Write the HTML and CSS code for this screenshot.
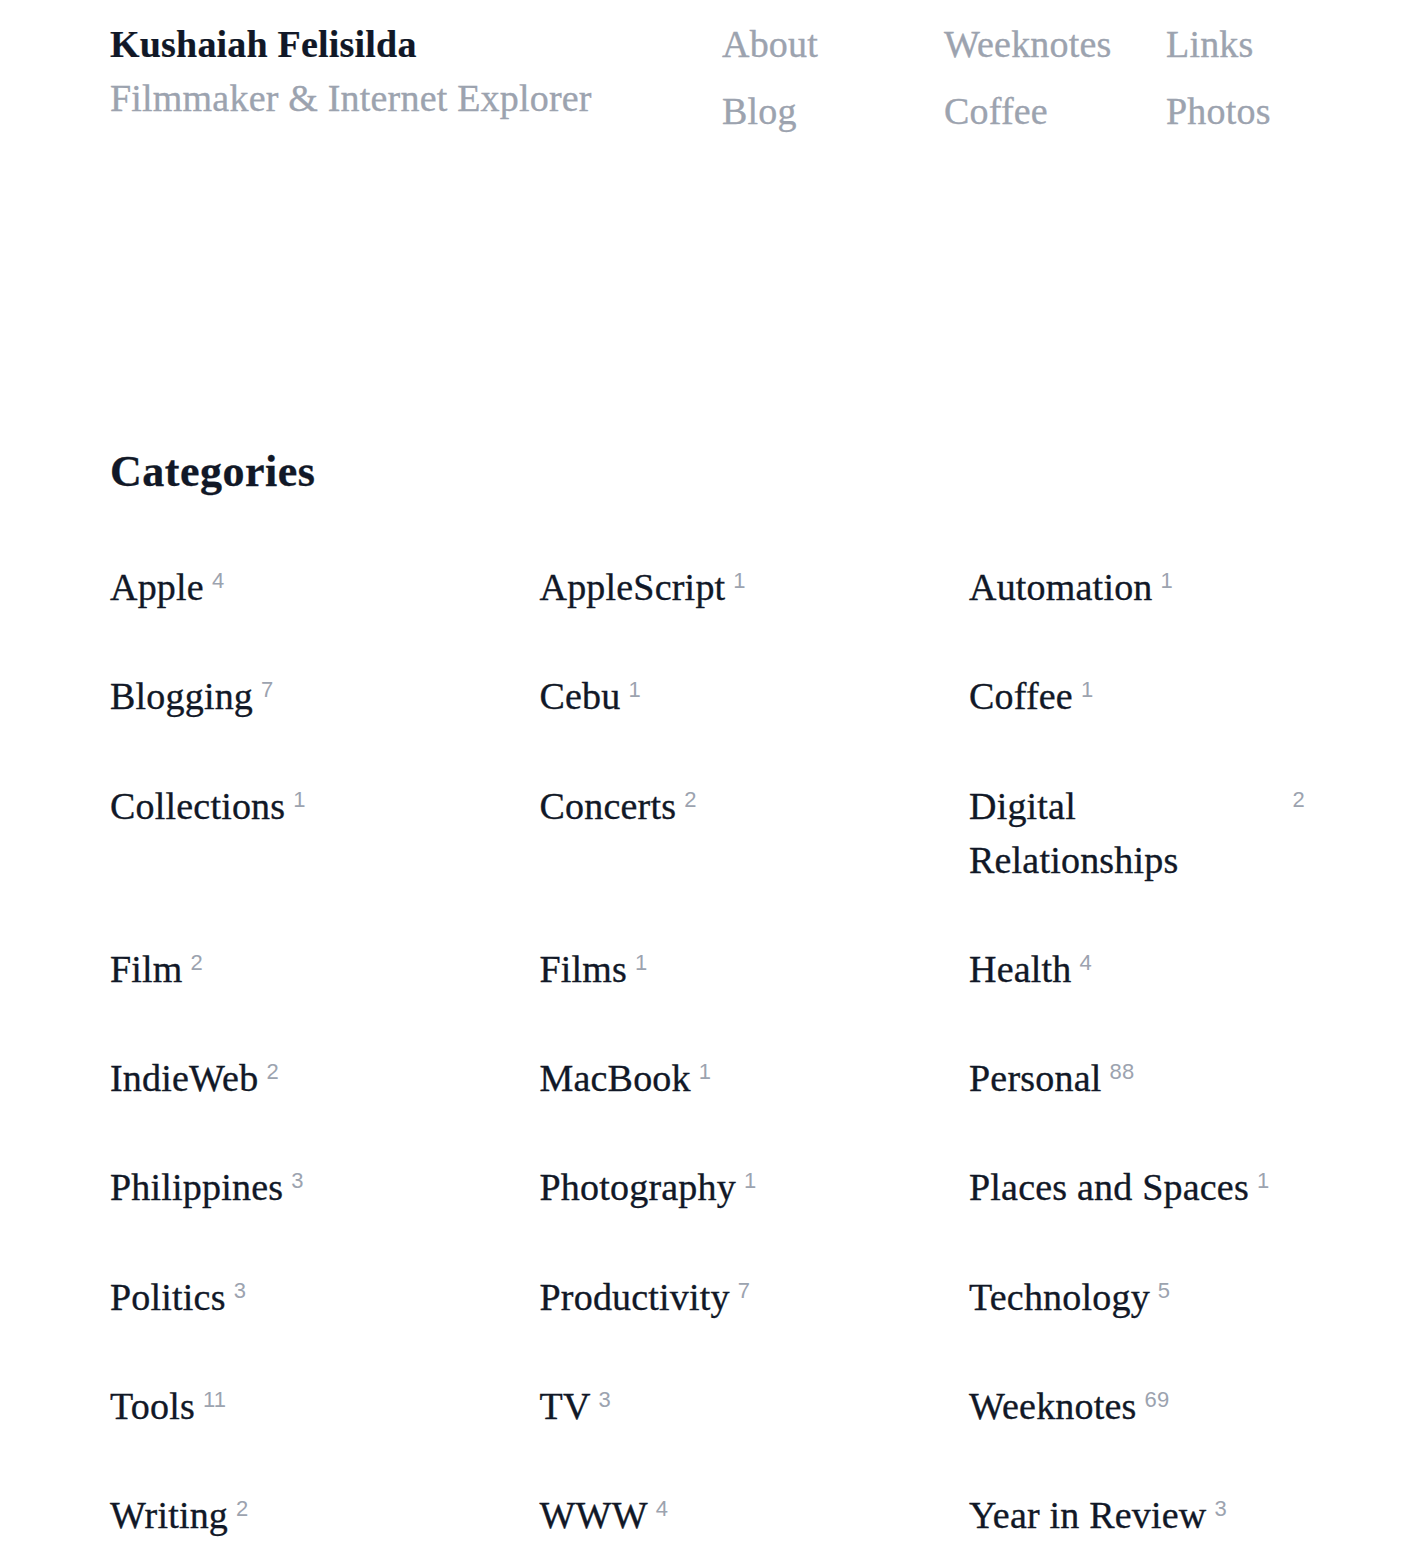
FILE: index.html
```html
<!DOCTYPE html>
<html lang="en">
<head>
<meta charset="utf-8">
<title>Categories — Kushaiah Felisilda</title>
<link rel="stylesheet" href="styles.css">
</head>
<body>
<div class="page">
  <header class="site-header">
    <div class="brand">
      <div class="brand-name">Kushaiah Felisilda</div>
      <div class="brand-tag">Filmmaker &amp; Internet Explorer</div>
    </div>
    <nav class="site-nav">
      <a href="#">About</a>
      <a href="#">Weeknotes</a>
      <a href="#">Links</a>
      <a href="#">Blog</a>
      <a href="#">Coffee</a>
      <a href="#">Photos</a>
    </nav>
  </header>

  <main class="content">
    <h1 class="title">Categories</h1>
    <ul class="cat-grid">
      <li class="cat"><a class="cat-name" href="#">Apple</a><span class="cat-count">4</span></li>
      <li class="cat"><a class="cat-name" href="#">AppleScript</a><span class="cat-count">1</span></li>
      <li class="cat"><a class="cat-name" href="#">Automation</a><span class="cat-count">1</span></li>
      <li class="cat"><a class="cat-name" href="#">Blogging</a><span class="cat-count">7</span></li>
      <li class="cat"><a class="cat-name" href="#">Cebu</a><span class="cat-count">1</span></li>
      <li class="cat"><a class="cat-name" href="#">Coffee</a><span class="cat-count">1</span></li>
      <li class="cat"><a class="cat-name" href="#">Collections</a><span class="cat-count">1</span></li>
      <li class="cat"><a class="cat-name" href="#">Concerts</a><span class="cat-count">2</span></li>
      <li class="cat"><a class="cat-name" href="#">Digital Relationships</a><span class="cat-count">2</span></li>
      <li class="cat"><a class="cat-name" href="#">Film</a><span class="cat-count">2</span></li>
      <li class="cat"><a class="cat-name" href="#">Films</a><span class="cat-count">1</span></li>
      <li class="cat"><a class="cat-name" href="#">Health</a><span class="cat-count">4</span></li>
      <li class="cat"><a class="cat-name" href="#">IndieWeb</a><span class="cat-count">2</span></li>
      <li class="cat"><a class="cat-name" href="#">MacBook</a><span class="cat-count">1</span></li>
      <li class="cat"><a class="cat-name" href="#">Personal</a><span class="cat-count">88</span></li>
      <li class="cat"><a class="cat-name" href="#">Philippines</a><span class="cat-count">3</span></li>
      <li class="cat"><a class="cat-name" href="#">Photography</a><span class="cat-count">1</span></li>
      <li class="cat"><a class="cat-name" href="#">Places and Spaces</a><span class="cat-count">1</span></li>
      <li class="cat"><a class="cat-name" href="#">Politics</a><span class="cat-count">3</span></li>
      <li class="cat"><a class="cat-name" href="#">Productivity</a><span class="cat-count">7</span></li>
      <li class="cat"><a class="cat-name" href="#">Technology</a><span class="cat-count">5</span></li>
      <li class="cat"><a class="cat-name" href="#">Tools</a><span class="cat-count">11</span></li>
      <li class="cat"><a class="cat-name" href="#">TV</a><span class="cat-count">3</span></li>
      <li class="cat"><a class="cat-name" href="#">Weeknotes</a><span class="cat-count">69</span></li>
      <li class="cat"><a class="cat-name" href="#">Writing</a><span class="cat-count">2</span></li>
      <li class="cat"><a class="cat-name" href="#">WWW</a><span class="cat-count">4</span></li>
      <li class="cat"><a class="cat-name" href="#">Year in Review</a><span class="cat-count">3</span></li>
    </ul>
  </main>
</div>
</body>
</html>
```

FILE: styles.css
```css
html, body {
  margin: 0;
  padding: 0;
  background: #ffffff;
}

body {
  font-family: "Liberation Serif", "Times New Roman", serif;
  font-size: 38px;
  line-height: 54px;
  letter-spacing: 0.2px;
  color: #111827;
  -webkit-text-stroke: 0.35px currentColor;
}

a {
  color: inherit;
  text-decoration: none;
}

.page {
  padding: 17px 110px 0 110px;
}

.site-header {
  display: flex;
  align-items: flex-start;
}

.brand {
  flex: 0 0 612px;
}

.brand-name {
  font-weight: 700;
  color: #111827;
  -webkit-text-stroke: 0.2px currentColor;
}

.brand-tag {
  color: #9ca3af;
}

.site-nav {
  display: grid;
  grid-template-columns: 222px 222px 222px;
  row-gap: 13px;
  color: #9ca3af;
}

.content {
  margin-top: 307px;
}

.title {
  margin: 0 0 62px 0;
  font-size: 44px;
  line-height: 53px;
  font-weight: 700;
  letter-spacing: 0.5px;
  color: #111827;
  -webkit-text-stroke: 0.3px currentColor;
}

.cat-grid {
  list-style: none;
  margin: 0;
  padding: 0;
  display: grid;
  grid-template-columns: repeat(3, 336px);
  column-gap: 93.5px;
  row-gap: 55.25px;
}

.cat {
  display: flex;
  align-items: flex-start;
}

.cat-name {
  color: #111827;
}

.cat-count {
  flex: 0 0 auto;
  margin-left: 8px;
  margin-top: 10px;
  font-family: "Liberation Sans", Arial, sans-serif;
  font-size: 22px;
  line-height: 22px;
  letter-spacing: 0.3px;
  color: #9ca3af;
  -webkit-text-stroke: 0;
}
```
